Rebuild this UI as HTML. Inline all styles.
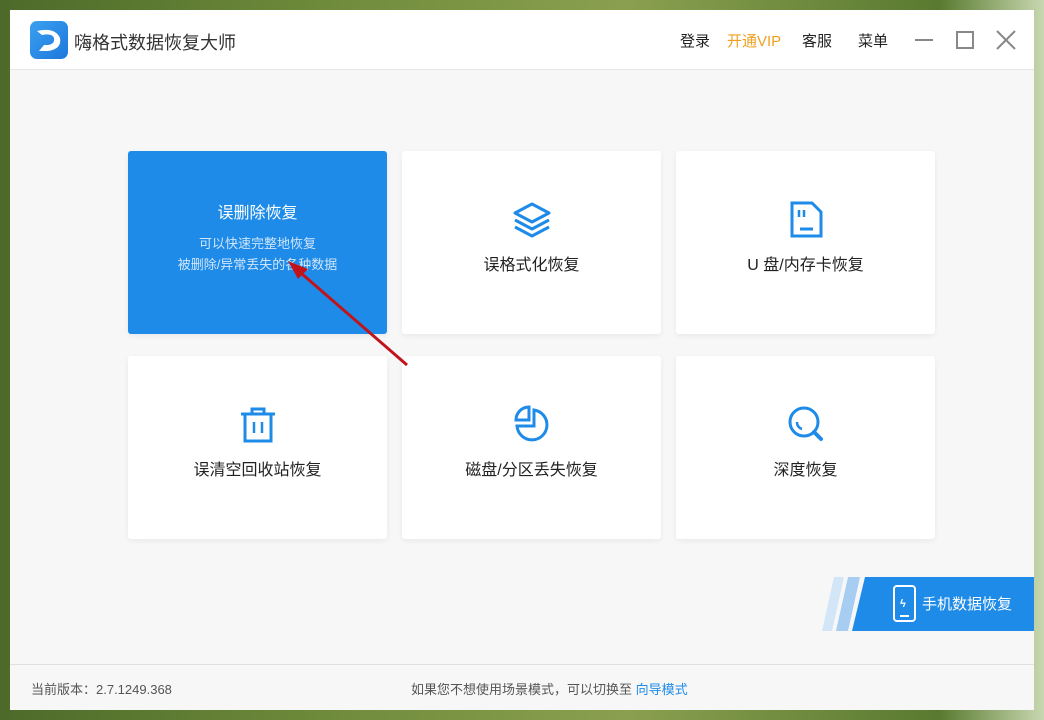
<!DOCTYPE html>
<html><head><meta charset="utf-8"><style>
*{margin:0;padding:0;box-sizing:border-box}
body{width:1044px;height:720px;overflow:hidden;position:relative;font-family:"Liberation Sans","Noto Sans CJK SC",sans-serif;background:linear-gradient(90deg,#4d6a2a,#6d8a3a 30%,#8aa050 60%,#5a7a30 90%,#c8d8b0);}
.win{position:absolute;left:10px;top:10px;width:1024px;height:700px;background:#f7f7f7;}
.title{position:absolute;left:0;top:0;width:1024px;height:60px;background:#fff;border-bottom:1px solid #e6e6e6;}
.logo{position:absolute;left:20px;top:11px;width:38px;height:38px;border-radius:7px;background:linear-gradient(135deg,#3aa0f0,#1e78dc);}
.apptitle{position:absolute;left:64px;top:19px;font-size:18px;color:#333}
.nav{position:absolute;top:20px;font-size:15px;color:#222}
.card{position:absolute;width:259px;height:183px;background:#fff;border-radius:3px;box-shadow:0 2px 6px rgba(0,0,0,.06);text-align:center;}
.card .t{position:absolute;left:0;right:0;top:100px;font-size:16px;color:#222}
.card svg{position:absolute;left:110px;top:48px}
.footer{position:absolute;left:0;top:654px;width:1024px;height:46px;border-top:1px solid #e0e0e0;background:#f7f7f7;font-size:13px;color:#555}
</style></head><body>
<div class="win">
<div class="title">
<div class="logo"><svg width="38" height="38" viewBox="0 0 38 38"><path d="M7 10 Q25 6 30 17 Q32 28 18 30 L9 30 L14 24 L18 24 Q25 23 24 17 Q22 12 12 14 Z" fill="#fff"/></svg></div>
<div class="apptitle">嗨格式数据恢复大师</div>
<div class="nav" style="left:670px">登录</div>
<div class="nav" style="left:717px;color:#f0a020">开通VIP</div>
<div class="nav" style="left:792px">客服</div>
<div class="nav" style="left:848px">菜单</div>
<div style="position:absolute;left:905px;top:29px;width:18px;height:2px;background:#888"></div>
<div style="position:absolute;left:946px;top:21px;width:18px;height:18px;border:2px solid #888"></div>
<svg style="position:absolute;left:986px;top:20px" width="20" height="20"><path d="M1 1L19 19M19 1L1 19" stroke="#888" stroke-width="2"/></svg>
</div>

<div class="card" style="left:118px;top:141px;background:#1e8be8;">
<div style="position:absolute;left:0;right:0;top:48px;font-size:16px;color:#fff">误删除恢复</div>
<div style="position:absolute;left:0;right:0;top:82px;font-size:13px;color:#cfe5fb;line-height:21px">可以快速完整地恢复<br>被删除/异常丢失的各种数据</div>
</div>
<div class="card" style="left:392px;top:141px"><svg width="40" height="40" viewBox="0 0 40 40" fill="none" stroke="#1e8be8" stroke-width="3" stroke-linejoin="round"><path d="M20 5L37 14L20 23L3 14Z"/><path d="M3 21L20 30L37 21"/><path d="M3 28L20 37L37 28"/></svg><div class="t">误格式化恢复</div></div>
<div class="card" style="left:666px;top:141px"><svg width="40" height="40" viewBox="0 0 40 40" fill="none" stroke="#1e8be8" stroke-width="3"><path d="M6 4H26L35 13V37H6Z"/><path d="M13 11V18M18 11V18" stroke-width="2.5"/><path d="M14 30H27"/></svg><div class="t">U 盘/内存卡恢复</div></div>
<div class="card" style="left:118px;top:346px"><svg width="40" height="40" viewBox="0 0 40 40" fill="none" stroke="#1e8be8" stroke-width="3"><path d="M3 10H37M14 10V5H26V10"/><path d="M7 10V37H33V10"/><path d="M16 18V29M24 18V29" stroke-width="2.5"/></svg><div class="t">误清空回收站恢复</div></div>
<div class="card" style="left:392px;top:346px"><svg width="40" height="40" viewBox="0 0 40 40" fill="none" stroke="#1e8be8" stroke-width="3"><path d="M22 6A15 15 0 1 1 5 22H22Z"/><path d="M17 3A13 13 0 0 0 4 16H17Z"/></svg><div class="t">磁盘/分区丢失恢复</div></div>
<div class="card" style="left:666px;top:346px"><svg width="40" height="40" viewBox="0 0 40 40" fill="none" stroke="#1e8be8" stroke-width="3"><circle cx="18" cy="18" r="14"/><path d="M11 18A7 7 0 0 0 16 25" stroke-width="2.5"/><path d="M28 28L35 35" stroke-width="4" stroke-linecap="round"/></svg><div class="t">深度恢复</div></div>

<svg style="position:absolute;left:812px;top:567px" width="212" height="54"><polygon points="12,0 22,0 10,54 0,54" fill="#d3e6f8"/><polygon points="26,0 38,0 26,54 14,54" fill="#a7cdf2"/><polygon points="43,0 212,0 212,54 30,54" fill="#1e8be8"/><rect x="72" y="9" width="21" height="35" rx="3" fill="none" stroke="#fff" stroke-width="2"/><path d="M78 39H87" stroke="#fff" stroke-width="2"/><text x="78" y="30" fill="#fff" font-size="11" font-weight="bold">ϟ</text><text x="100" y="32" fill="#fff" font-size="15" font-family="Liberation Sans,Noto Sans CJK SC,sans-serif">手机数据恢复</text></svg>

<div class="footer"><span style="position:absolute;left:21px;top:14px">当前版本：2.7.1249.368</span><span style="position:absolute;left:401px;top:14px">如果您不想使用场景模式，可以切换至 <span style="color:#1e8be8">向导模式</span></span></div>
</div>
<svg style="position:absolute;left:280px;top:255px" width="140" height="115"><path d="M127 110L14 12" stroke="#c0141c" stroke-width="3"/><polygon points="8,6 28,14 18,24" fill="#c0141c"/></svg>
</body></html>
